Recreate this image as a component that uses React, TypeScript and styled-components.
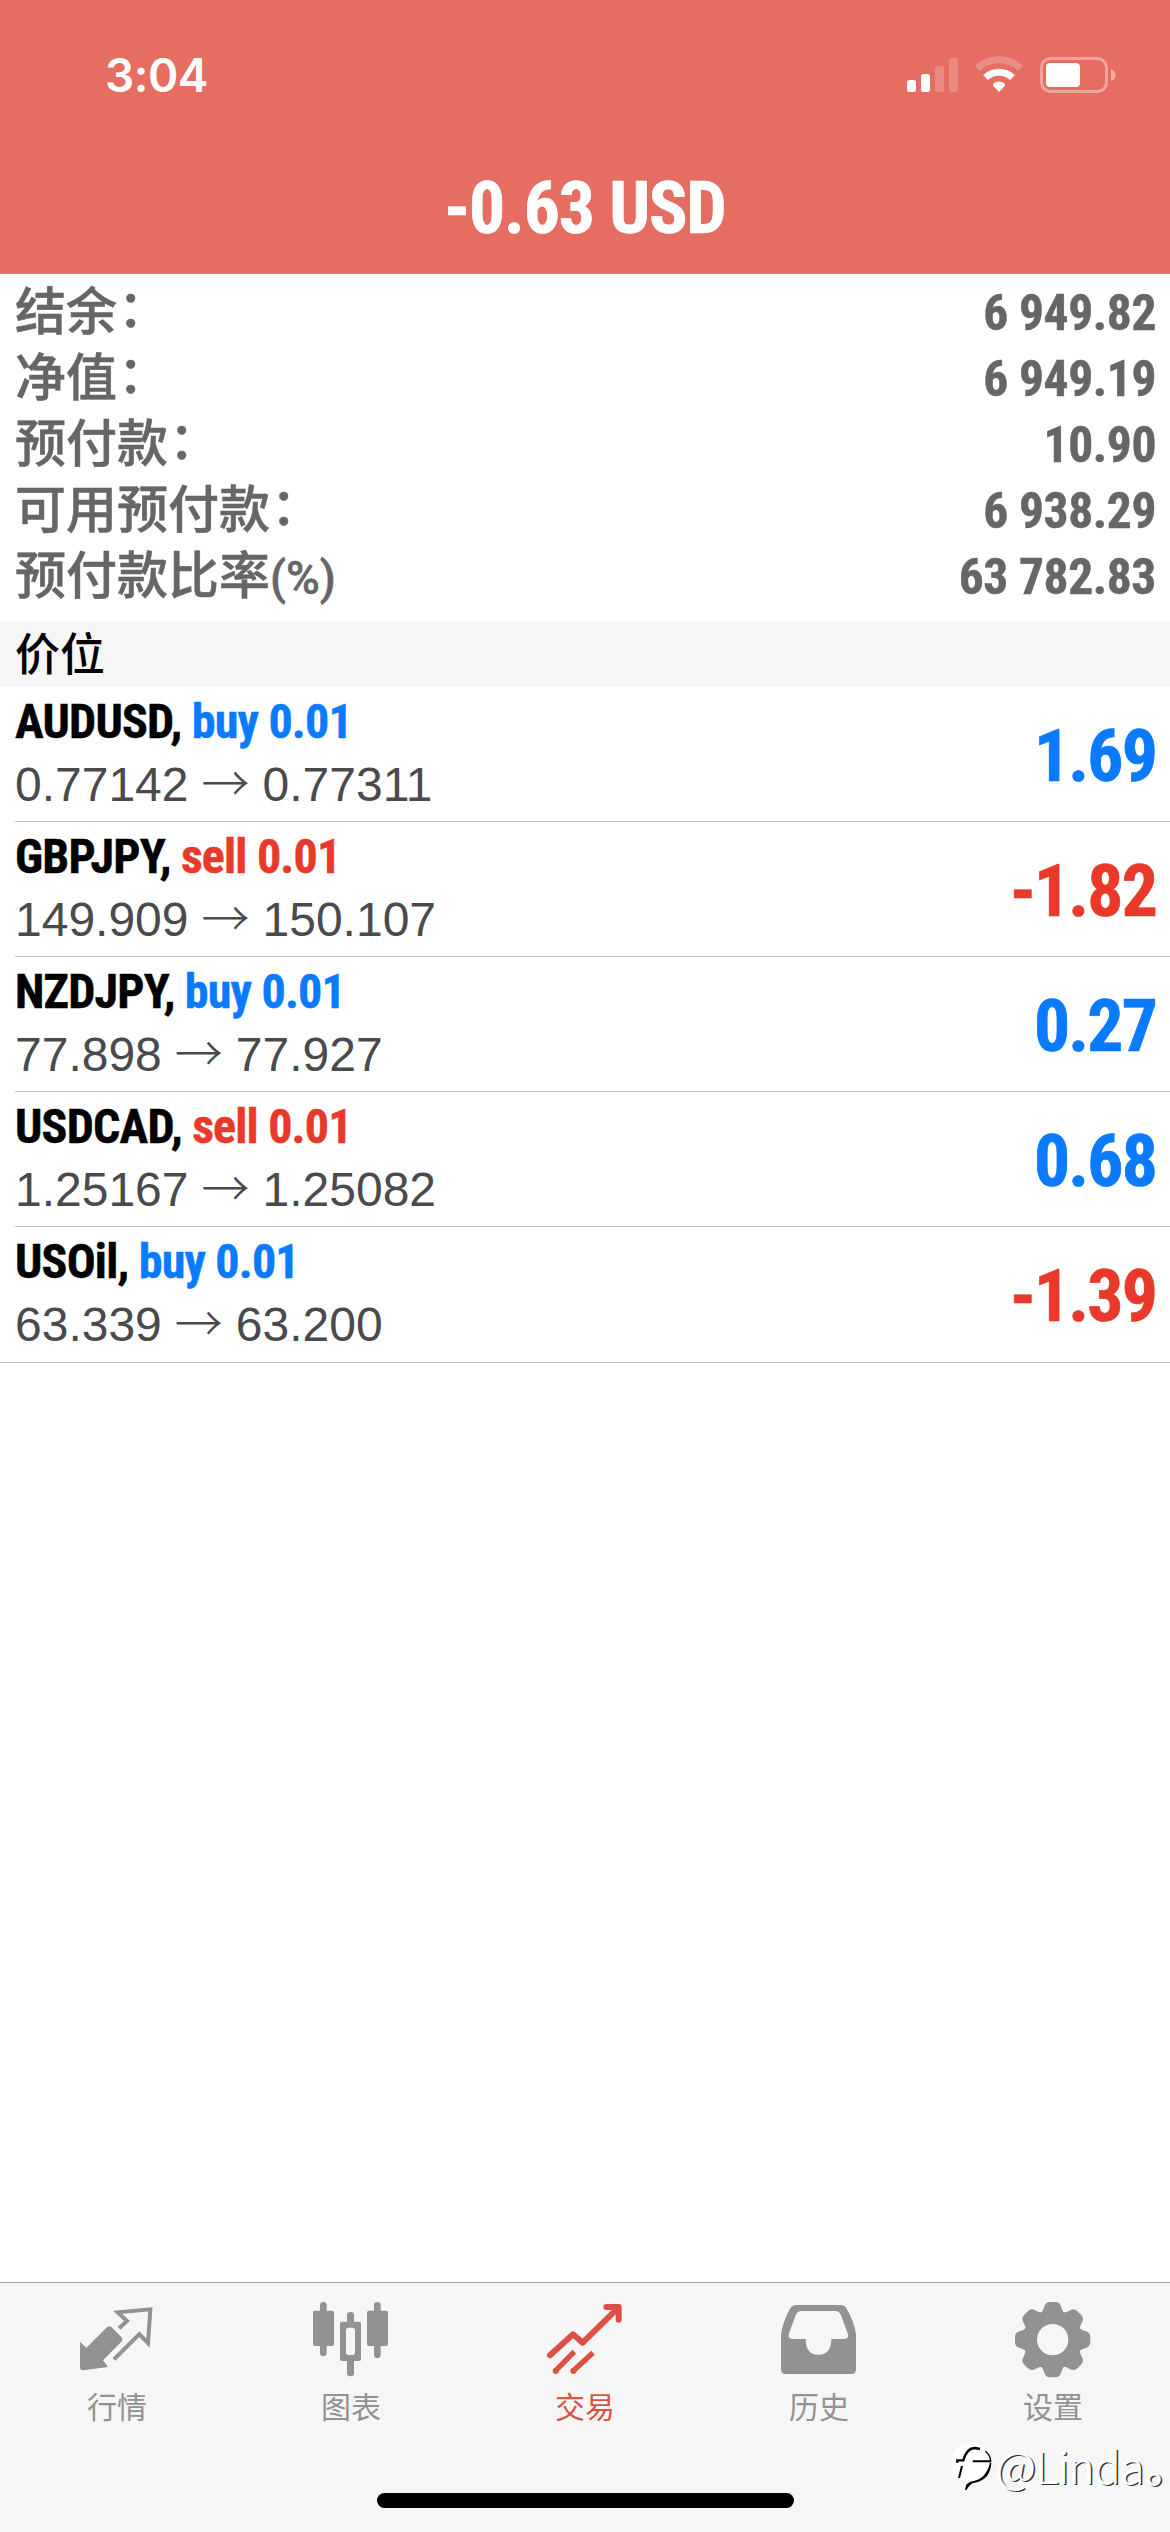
import React from "react";
import styled, { createGlobalStyle } from "styled-components";

const BLUE = "#0a7aff";
const RED = "#e8392b";
const LATIN = `"Liberation Sans", Arial, "Noto Sans CJK SC", sans-serif`;
const HAN = `"Noto Sans CJK SC", "Liberation Sans", sans-serif`;

const GlobalStyle = createGlobalStyle`
  * { box-sizing: border-box; }
  body { margin: 0; background: #fff; }
`;

const Screen = styled.div`
  position: relative;
  display: flex;
  flex-direction: column;
  width: 1170px;
  height: 2532px;
  background: #fff;
  font-family: ${LATIN};
  white-space: pre;
  overflow: hidden;
`;

const Condensed = styled.span<{ $size: number; $color?: string; $tracking?: number }>`
  font-family: Roboto, "Roboto Condensed", sans-serif;
  font-stretch: 75%;
  font-size: ${(p) => p.$size}px;
  font-weight: 700;
  letter-spacing: ${(p) => p.$tracking ?? 0}px;
  color: ${(p) => p.$color ?? "inherit"};
  -webkit-text-stroke: 0.01em currentColor;
`;

const Header = styled.header`
  flex: none;
  height: 274px;
  background: #e66d62;
  border-bottom: 1px solid #b58f8c;
  color: #fff;
`;

const StatusBar = styled.div`
  display: flex;
  align-items: center;
  justify-content: space-between;
  height: 148px;
  padding: 2px 53px 0 105px;
`;

const Clock = styled.span`
  font-family: Inter, sans-serif;
  font-size: 46px;
  font-weight: 600;
  letter-spacing: -0.5px;
  line-height: 60px;
`;

const StatusIcons = styled.svg`
  display: block;
  width: 212px;
  height: 40px;
`;

const Title = styled.div`
  display: flex;
  align-items: baseline;
  justify-content: center;
  padding-top: 19px;
  line-height: 83px;
`;

const Summary = styled.section`
  flex: none;
  height: 347px;
  padding: 0 14px 0 15px;
  color: #666;
`;

const SummaryRow = styled.div`
  display: flex;
  align-items: baseline;
  justify-content: space-between;
  height: 66px;
  line-height: 66px;
`;

const SummaryLabel = styled.span`
  font-family: ${HAN};
  font-size: 51px;
  font-weight: 500;
  line-height: 68px;
  -webkit-text-stroke: 0.5px currentColor;
`;

const Colon = styled.span`
  margin-left: 1px;
  line-height: 40px;
  vertical-align: 3px;
`;

const Unit = styled.span`
  font-family: Roboto, sans-serif;
  font-size: 46px;
  font-weight: 500;
`;

const SectionTitle = styled.h2`
  flex: none;
  height: 66px;
  margin: 0;
  padding-left: 15px;
  background: #f6f6f6;
  color: #000;
  font-family: ${HAN};
  font-size: 45px;
  font-weight: 500;
  line-height: 62px;
`;

const Positions = styled.section`
  flex: 1;
`;

const PositionRow = styled.div<{ $last: boolean }>`
  display: flex;
  align-items: center;
  justify-content: space-between;
  height: ${(p) => (p.$last ? 136 : 135)}px;
  margin-left: ${(p) => (p.$last ? 0 : 15)}px;
  padding: 0 14px ${(p) => (p.$last ? 1 : 0)}px ${(p) => (p.$last ? 15 : 0)}px;
  border-bottom: 1px solid #c2c2c4;
`;

const PositionInfo = styled.div`
  display: flex;
  flex-direction: column;
  padding-bottom: 2px;
`;

const Deal = styled.div`
  display: flex;
  align-items: baseline;
  height: 63px;
  line-height: 63px;
`;

const Prices = styled.div`
  display: flex;
  align-items: baseline;
  height: 63px;
  color: #4a4a4c;
  font-size: 48px;
  line-height: 63px;
`;

const Arrow = styled.span`
  margin: 0 13px;
  font-family: "Noto Sans CJK SC", sans-serif;
  font-weight: 300;
  line-height: 50px;
`;

const Profit = styled(Condensed)`
  padding-top: 5px;
  line-height: 83px;
`;

const TabBar = styled.nav`
  flex: none;
  display: grid;
  grid-template-columns: repeat(5, 1fr);
  grid-template-rows: 1fr 39px;
  height: 250px;
  border-top: 1px solid #a8a8aa;
  background: #f6f6f6;
`;

const Tab = styled.a<{ $active: boolean }>`
  display: flex;
  flex-direction: column;
  align-items: center;
  padding-top: 17px;
  color: ${(p) => (p.$active ? "#dd5144" : "#929292")};
  font-family: ${HAN};
  font-size: 30px;
  line-height: 44px;
`;

const TabIcon = styled.svg`
  display: block;
  width: 78px;
  height: 78px;
  margin-bottom: 5px;
`;

const HomeIndicator = styled.div`
  grid-column: 1 / -1;
  justify-self: center;
  width: 417px;
  height: 15px;
  border-radius: 8px;
  background: #000;
`;

const Watermark = styled.div`
  position: absolute;
  left: 948px;
  top: 2435px;
  display: flex;
  align-items: center;
  height: 60px;
  color: #fff;
  font-family: "Noto Sans CJK SC", sans-serif;
  font-size: 44px;
  font-weight: 300;
  letter-spacing: -0.5px;
  line-height: 60px;
  text-shadow: 1.5px 1px 0.5px #333, -1px 0 0 #fff;
`;

const WatermarkStop = styled.span`
  margin-left: 2px;
  font-size: 42px;
  font-weight: 500;
  font-feature-settings: "halt";
`;

const WatermarkLogo = styled.svg`
  flex: none;
  width: 50px;
  height: 52px;
  margin: 6px -2px 0 0;
`;

const summary = [
  { label: "结余", colon: "：", value: "6 949.82" },
  { label: "净值", colon: "：", value: "6 949.19" },
  { label: "预付款", colon: "：", value: "10.90" },
  { label: "可用预付款", colon: "：", value: "6 938.29" },
  { label: "预付款比率", unit: "(%)", value: "63 782.83" },
];

const positions = [
  { symbol: "AUDUSD", side: "buy", open: "0.77142", now: "0.77311", profit: "1.69" },
  { symbol: "GBPJPY", side: "sell", open: "149.909", now: "150.107", profit: "-1.82" },
  { symbol: "NZDJPY", side: "buy", open: "77.898", now: "77.927", profit: "0.27" },
  { symbol: "USDCAD", side: "sell", open: "1.25167", now: "1.25082", profit: "0.68" },
  { symbol: "USOil", side: "buy", open: "63.339", now: "63.200", profit: "-1.39" },
];

const QuotesIcon = () => (
  <TabIcon viewBox="114 90 234 234">
    <path d="M120 215 L139 233 L201 172 Q208 165 215 172 L244 201 Q251 208 244 215 L189 271 L204 291 L130 301 Q120 302 120 292 Z" fill="currentColor" />
    <path d="M237 175 L261 153 L233 127 L331 118 L324 219 L298 192 L222 268" fill="none" stroke="currentColor" strokeWidth="12" />
  </TabIcon>
);

const ChartIcon = () => (
  <TabIcon viewBox="816 90 234 234">
    <g fill="currentColor">
      <rect x="840" y="96" width="20" height="162" rx="10" />
      <rect x="819" y="122" width="63" height="106" rx="6" />
      <rect x="1002" y="96" width="20" height="168" rx="10" />
      <rect x="981" y="122" width="63" height="106" rx="6" />
      <rect x="921" y="126" width="21" height="193" rx="10" />
      <rect x="900" y="155" width="63" height="118" rx="6" />
    </g>
    <rect x="918" y="173" width="27" height="82" rx="8" fill="#f6f6f6" />
  </TabIcon>
);

const TradeIcon = () => (
  <TabIcon viewBox="138 90 234 234">
    <g fill="none" stroke="currentColor" strokeWidth="18" strokeLinejoin="round">
      <path d="M150 256 L219 193 L248 218 L352 116" strokeLinecap="round" />
      <path d="M319 111 H356 V149" strokeLinecap="round" />
    </g>
    <path d="M346 104 L362 104 L362 128 L350 132 L338 118 Z" fill="currentColor" />
    <g stroke="currentColor" strokeWidth="16">
      <path d="M223 245 L167 302" />
      <path d="M279 248 L220 302" />
    </g>
    <g fill="currentColor">
      <circle cx="167" cy="303" r="9" />
      <circle cx="220" cy="303" r="9" />
    </g>
  </TabIcon>
);

const HistoryIcon = () => (
  <TabIcon viewBox="840 90 234 234">
    <path
      fill="currentColor"
      fillRule="evenodd"
      d="M888 105 H1022 Q1034 105 1040 116 Q1064 158 1068 194 V298 Q1068 312 1054 312 H857 Q843 312 843 298 V194 Q847 158 870 116 Q876 105 888 105 Z M905 123 Q892 123 887 136 L867 190 Q863 207 877 207 H917 Q917 254 955 254 Q994 254 994 207 H1033 Q1048 207 1043 190 L1023 136 Q1018 123 1006 123 Z"
    />
  </TabIcon>
);

const SettingsIcon = () => (
  <TabIcon viewBox="252 90 234 234">
    <g fill="currentColor">
      {[0, 45, 90, 135, 180, 225, 270, 315].map((a) => (
        <path
          key={a}
          transform={`rotate(${a} 368 209)`}
          d="M326 133 Q338 128 342 112 Q346 96 360 96 H376 Q390 96 394 112 Q398 128 410 133 L400 170 H336 Z"
        />
      ))}
    </g>
    <circle cx="368" cy="209" r="64" fill="none" stroke="currentColor" strokeWidth="34" />
    <circle cx="368" cy="209" r="47" fill="#f6f6f6" />
  </TabIcon>
);

const tabs = [
  { label: "行情", Icon: QuotesIcon },
  { label: "图表", Icon: ChartIcon },
  { label: "交易", Icon: TradeIcon, active: true },
  { label: "历史", Icon: HistoryIcon },
  { label: "设置", Icon: SettingsIcon },
];

export default function App() {
  return (
    <Screen>
      <GlobalStyle />
      <Header>
        <StatusBar>
          <Clock>3:04</Clock>
          <StatusIcons viewBox="905 54 212 40">
            <g fill="#fff">
              <rect x="907" y="79" width="9" height="12" rx="2.5" />
              <rect x="921" y="73" width="9" height="18" rx="2.5" />
              <rect x="935" y="65" width="9" height="26" rx="2.5" opacity=".2" />
              <rect x="949" y="57" width="9" height="34" rx="2.5" opacity=".2" />
            </g>
            <g fill="none" stroke="#fff" strokeWidth="7">
              <path d="M977.5 67.5 A31 31 0 0 1 1020.500 67.5" opacity=".22" />
              <path d="M985.500 76.500 A20 20 0 0 1 1012.500 76.500" />
            </g>
            <path d="M999 91 L993 84.500 Q992.500 81 999 80.500 Q1005.500 81 1005 84.500 Z" fill="#fff" />
            <rect x="1041.500" y="57.500" width="65" height="33" rx="9" fill="none" stroke="#fff" strokeWidth="3" opacity=".38" />
            <rect x="1046" y="62" width="34" height="24" rx="4" fill="#fff" />
            <path d="M1111 68 Q1115.500 70 1115.500 74 Q1115.500 78 1111 80 Z" fill="#fff" opacity=".45" />
          </StatusIcons>
        </StatusBar>
        <Title>
          <Condensed $size={71.5} $tracking={-1.1}>-0.63 USD</Condensed>
        </Title>
      </Header>

      <Summary>
        {summary.map((row) => (
          <SummaryRow key={row.label}>
            <SummaryLabel>
              {row.label}
              {row.colon && <Colon>{row.colon}</Colon>}
              {row.unit && <Unit>{row.unit}</Unit>}
            </SummaryLabel>
            <Condensed $size={49.5} $tracking={-0.4}>{row.value}</Condensed>
          </SummaryRow>
        ))}
      </Summary>

      <SectionTitle>价位</SectionTitle>

      <Positions>
        {positions.map((p, i) => (
          <PositionRow key={p.symbol} $last={i === positions.length - 1}>
            <PositionInfo>
              <Deal>
                <Condensed $size={48} $tracking={-0.8}>{p.symbol}, </Condensed>
                <Condensed $size={48} $tracking={-0.8} $color={p.side === "buy" ? BLUE : RED}>
                  {p.side} 0.01
                </Condensed>
              </Deal>
              <Prices>
                {p.open}
                <Arrow>→</Arrow>
                {p.now}
              </Prices>
            </PositionInfo>
            <Profit $size={71.5} $tracking={-1.8} $color={p.profit.startsWith("-") ? RED : BLUE}>
              {p.profit}
            </Profit>
          </PositionRow>
        ))}
      </Positions>

      <TabBar>
        {tabs.map(({ label, Icon, active }) => (
          <Tab key={label} $active={!!active}>
            <Icon />
            {label}
          </Tab>
        ))}
        <HomeIndicator />
      </TabBar>

      <Watermark>
        <WatermarkLogo viewBox="10 18 150 156">
          <path d="M20 76 A60 54 0 0 1 140 72 Q138 130 84 142 L66 160 L56 158 L62 134 L40 128 Q20 110 20 76 Z" fill="#fff" />
          <path d="M38 80 V73 H56 Q66 36 92 36 L106 39" fill="none" stroke="#000" strokeWidth="7" />
          <path d="M84 76 H138 M52 90 L43 126" fill="none" stroke="#000" strokeWidth="6" />
          <path d="M122 46 Q138 58 138 78" fill="none" stroke="#000" strokeWidth="4" />
          <path d="M138 80 Q136 112 118 126 Q106 136 82 140 Q72 146 63 162 L66 148 Q76 138 84 138 Q104 134 116 122 Q132 108 138 80 Z" fill="#000" stroke="#000" strokeWidth="4" />
        </WatermarkLogo>
        @Linda<WatermarkStop>。</WatermarkStop>
      </Watermark>
    </Screen>
  );
}
